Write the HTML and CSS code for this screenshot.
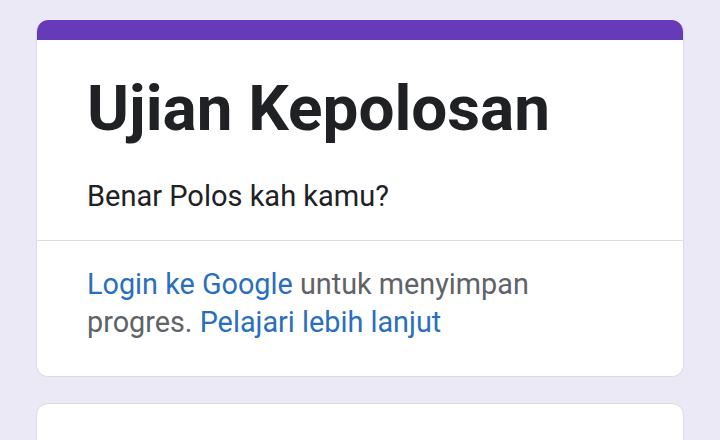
FILE: index.html
```html
<!DOCTYPE html>
<html lang="id">
<head>
<meta charset="utf-8">
<title>Ujian Kepolosan</title>
<link rel="stylesheet" href="styles.css">
</head>
<body>
<main class="page">
  <section class="card header-card">
    <div class="accent"></div>
    <div class="head">
      <h1 class="title">Ujian Kepolosan</h1>
      <p class="desc">Benar Polos kah kamu?</p>
    </div>
    <div class="login">
      <p><a class="link" href="#">Login ke Google</a> <span>untuk menyimpan</span> <span>progres.</span> <a class="link" href="#">Pelajari lebih lanjut</a></p>
    </div>
  </section>
  <section class="card next-card"></section>
</main>
</body>
</html>
```

FILE: styles.css
```css
html, body {
  margin: 0;
  padding: 0;
  background: #ece9f7;
  font-family: Roboto, "Liberation Sans", Arial, sans-serif;
}
.page {
  padding: 20px 36px 0;
  display: flex;
  flex-direction: column;
  gap: 26px;
}
.card {
  background: #ffffff;
  border: 1px solid #dadce0;
  border-radius: 12px;
  overflow: hidden;
}
.header-card {
  border-top: none;
}
.accent {
  height: 20px;
  background: #673ab7;
  margin: 0 -1px;
}
.head {
  padding: 31px 50px 26px;
  border-bottom: 1px solid #dadce0;
}
.title {
  margin: 0;
  font-size: 63.8px;
  line-height: 76px;
  font-weight: 700;
  color: #202124;
}
.desc {
  margin: 31px 0 0;
  font-size: 29px;
  line-height: 36px;
  color: #202124;
}
.login {
  padding: 24px 50px 35px;
}
.login p {
  margin: 0;
  font-size: 28.8px;
  line-height: 38px;
  color: #5f6368;
  max-width: 480px;
}
.link {
  color: #2a6fbf;
  text-decoration: none;
}
.next-card {
  height: 60px;
}
```
